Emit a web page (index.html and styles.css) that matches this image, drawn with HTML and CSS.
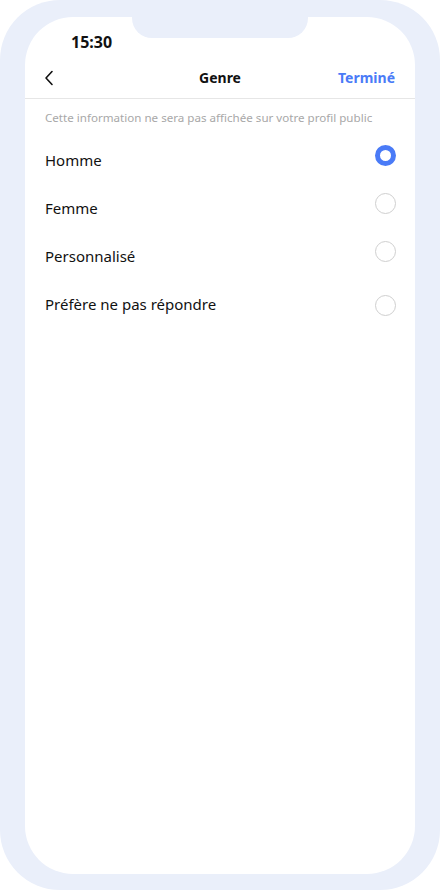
FILE: index.html
```html
<!DOCTYPE html>
<html lang="fr">
<head>
<meta charset="utf-8">
<link rel="stylesheet" href="styles.css">
</head>
<body>
<div class="frame">
  <div class="notch"></div>
  <div class="screen">
    <div class="status"><span class="time">15:30</span></div>
    <div class="nav">
      <svg class="back" width="10" height="16" viewBox="0 0 10 16"><path d="M8 1.5 L2 8 L8 14.5" fill="none" stroke="#111" stroke-width="1.6" stroke-linecap="round" stroke-linejoin="round"/></svg>
      <div class="title">Genre</div>
      <div class="done">Terminé</div>
    </div>
    <div class="note">Cette information ne sera pas affichée sur votre profil public</div>
    <ul class="options">
      <li class="option"><span>Homme</span><span class="radio checked raised"></span></li>
      <li class="option"><span>Femme</span><span class="radio raised"></span></li>
      <li class="option"><span>Personnalisé</span><span class="radio raised"></span></li>
      <li class="option"><span>Préfère ne pas répondre</span><span class="radio lowered"></span></li>
    </ul>
  </div>
</div>
</body>
</html>
```
FILE: styles.css
```css
* { box-sizing: border-box; }
html, body { margin: 0; padding: 0; background: #fff; }
body { font-family: "Noto Sans", "Open Sans", sans-serif; color: #111; }
.frame {
  position: relative;
  width: 440px;
  height: 890px;
  background: #eaeffa;
  border-radius: 60px;
  padding: 17px 25px 16px;
}
.notch {
  position: absolute;
  left: 132px;
  top: 0;
  width: 176px;
  height: 38px;
  background: #eaeffa;
  border-radius: 0 0 20px 20px;
  z-index: 2;
}
.screen {
  height: 857px;
  background: #fff;
  border-radius: 48px;
  overflow: hidden;
}
.status {
  height: 44px;
  padding: 14px 0 0 46px;
}
.time {
  font-weight: 700;
  font-size: 16px;
  line-height: 22px;
}
.nav {
  height: 38px;
  display: flex;
  align-items: center;
  justify-content: space-between;
  padding: 0 20px 4px 19px;
  border-bottom: 1px solid #e6e6e6;
  position: relative;
}
.back { display: block; }
.title {
  position: absolute;
  left: 0; right: 0; top: 0;
  height: 34px;
  line-height: 34px;
  text-align: center;
  font-weight: 700;
  font-size: 14px;
  pointer-events: none;
}
.done {
  color: #4a7bf7;
  font-weight: 700;
  font-size: 14px;
}
.note {
  padding: 12px 20px 0;
  font-size: 11.6px;
  line-height: 14px;
  color: #a8a8a8;
  white-space: nowrap;
}
.options {
  list-style: none;
  margin: 11px 0 0;
  padding: 0;
}
.option {
  height: 48px;
  display: flex;
  align-items: center;
  justify-content: space-between;
  padding: 0 19px 0 20px;
  font-size: 15px;
}
.radio {
  width: 21px;
  height: 21px;
  border-radius: 50%;
  border: 1px solid #cfcfcf;
}
.radio.checked {
  border: 5.5px solid #4a7bf7;
}
.radio.raised { margin-top: -9px; }
.radio.lowered { margin-top: 2px; }
```
